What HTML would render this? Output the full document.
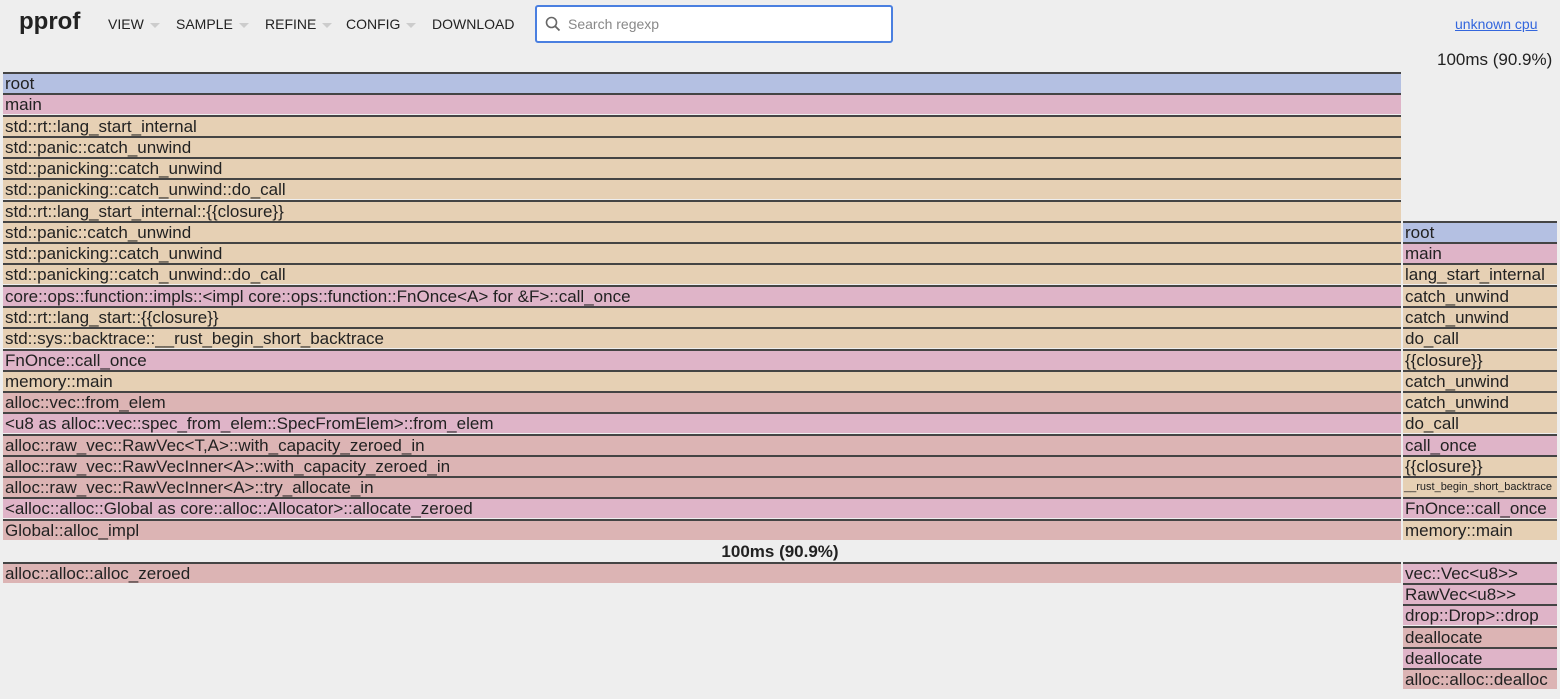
<!DOCTYPE html>
<html><head><meta charset="utf-8"><style>
body{margin:0;width:1560px;height:699px;background:#eeeeee;font-family:"Liberation Sans",sans-serif;position:relative;overflow:hidden;color:#222}
.logo{position:absolute;left:19px;top:8px;font-size:24px;font-weight:bold;color:#222}
.menu{position:absolute;top:16px;font-size:14px;color:#222}
.menu i{display:inline-block;width:0;height:0;border-left:5px solid transparent;border-right:5px solid transparent;border-top:5px solid #ccc;margin-left:6px;vertical-align:middle}
.search{position:absolute;left:535px;top:5px;width:358px;height:38px;border:2px solid #4a7fe0;border-radius:3px;background:#fff;box-sizing:border-box}
.search span{position:absolute;left:31px;top:9px;font-size:14px;color:#888}
.cpu{position:absolute;left:1455px;top:16px;font-size:14px;color:#3366dd;text-decoration:underline}
.tot{position:absolute;left:1437px;top:50px;font-size:17px}
.r{position:absolute;height:21px;box-sizing:border-box;border-top:2px solid #444;font-size:17px;line-height:19px;padding-left:2px;white-space:nowrap;overflow:hidden}
.L{left:3px;width:1398px}.R{left:1403px;width:154px}
.b{background:#b4c0e2}.p{background:#dfb4c8}.t{background:#e6d0b4}.s{background:#dcb4b4}
.lbl{position:absolute;left:0;width:1560px;top:542px;text-align:center;font-weight:bold;font-size:17px}
</style></head><body>
<div class="logo">pprof</div>
<div class="menu" style="left:108px">VIEW<i></i></div>
<div class="menu" style="left:176px">SAMPLE<i></i></div>
<div class="menu" style="left:265px">REFINE<i></i></div>
<div class="menu" style="left:346px">CONFIG<i></i></div>
<div class="menu" style="left:432px">DOWNLOAD</div>
<div class="search"><svg style="position:absolute;left:8px;top:9px" width="16" height="16" viewBox="0 0 16 16"><circle cx="6.5" cy="6.5" r="5" fill="none" stroke="#666" stroke-width="1.6"/><path d="M10.2 10.2L14.5 14.5" stroke="#666" stroke-width="1.8"/></svg><span>Search regexp</span></div>
<div class="cpu">unknown cpu</div>
<div class="tot">100ms (90.9%)</div>

<div class="r L b" style="top:72px">root</div>
<div class="r L p" style="top:93px">main</div>
<div class="r L t" style="top:115px">std::rt::lang_start_internal</div>
<div class="r L t" style="top:136px">std::panic::catch_unwind</div>
<div class="r L t" style="top:157px">std::panicking::catch_unwind</div>
<div class="r L t" style="top:178px">std::panicking::catch_unwind::do_call</div>
<div class="r L t" style="top:200px">std::rt::lang_start_internal::{{closure}}</div>
<div class="r L t" style="top:221px">std::panic::catch_unwind</div>
<div class="r L t" style="top:242px">std::panicking::catch_unwind</div>
<div class="r L t" style="top:263px">std::panicking::catch_unwind::do_call</div>
<div class="r L p" style="top:285px">core::ops::function::impls::&lt;impl core::ops::function::FnOnce&lt;A&gt; for &amp;F&gt;::call_once</div>
<div class="r L t" style="top:306px">std::rt::lang_start::{{closure}}</div>
<div class="r L t" style="top:327px">std::sys::backtrace::__rust_begin_short_backtrace</div>
<div class="r L p" style="top:349px">FnOnce::call_once</div>
<div class="r L t" style="top:370px">memory::main</div>
<div class="r L s" style="top:391px">alloc::vec::from_elem</div>
<div class="r L p" style="top:412px">&lt;u8 as alloc::vec::spec_from_elem::SpecFromElem&gt;::from_elem</div>
<div class="r L s" style="top:434px">alloc::raw_vec::RawVec&lt;T,A&gt;::with_capacity_zeroed_in</div>
<div class="r L s" style="top:455px">alloc::raw_vec::RawVecInner&lt;A&gt;::with_capacity_zeroed_in</div>
<div class="r L s" style="top:476px">alloc::raw_vec::RawVecInner&lt;A&gt;::try_allocate_in</div>
<div class="r L p" style="top:497px">&lt;alloc::alloc::Global as core::alloc::Allocator&gt;::allocate_zeroed</div>
<div class="r L s" style="top:519px">Global::alloc_impl</div>
<div class="lbl">100ms (90.9%)</div>
<div class="r L s" style="top:562px">alloc::alloc::alloc_zeroed</div>

<div class="r R b" style="top:221px">root</div>
<div class="r R p" style="top:242px">main</div>
<div class="r R t" style="top:263px">lang_start_internal</div>
<div class="r R t" style="top:285px">catch_unwind</div>
<div class="r R t" style="top:306px">catch_unwind</div>
<div class="r R t" style="top:327px">do_call</div>
<div class="r R t" style="top:349px">{{closure}}</div>
<div class="r R t" style="top:370px">catch_unwind</div>
<div class="r R t" style="top:391px">catch_unwind</div>
<div class="r R t" style="top:412px">do_call</div>
<div class="r R p" style="top:434px">call_once</div>
<div class="r R t" style="top:455px">{{closure}}</div>
<div class="r R t" style="top:476px;font-size:11px;line-height:19px;padding-left:1px">__rust_begin_short_backtrace</div>
<div class="r R p" style="top:497px">FnOnce::call_once</div>
<div class="r R t" style="top:519px">memory::main</div>
<div class="r R p" style="top:562px">vec::Vec&lt;u8&gt;&gt;</div>
<div class="r R p" style="top:583px">RawVec&lt;u8&gt;&gt;</div>
<div class="r R p" style="top:604px">drop::Drop&gt;::drop</div>
<div class="r R s" style="top:626px">deallocate</div>
<div class="r R p" style="top:647px">deallocate</div>
<div class="r R s" style="top:668px">alloc::alloc::dealloc</div>
</body></html>
